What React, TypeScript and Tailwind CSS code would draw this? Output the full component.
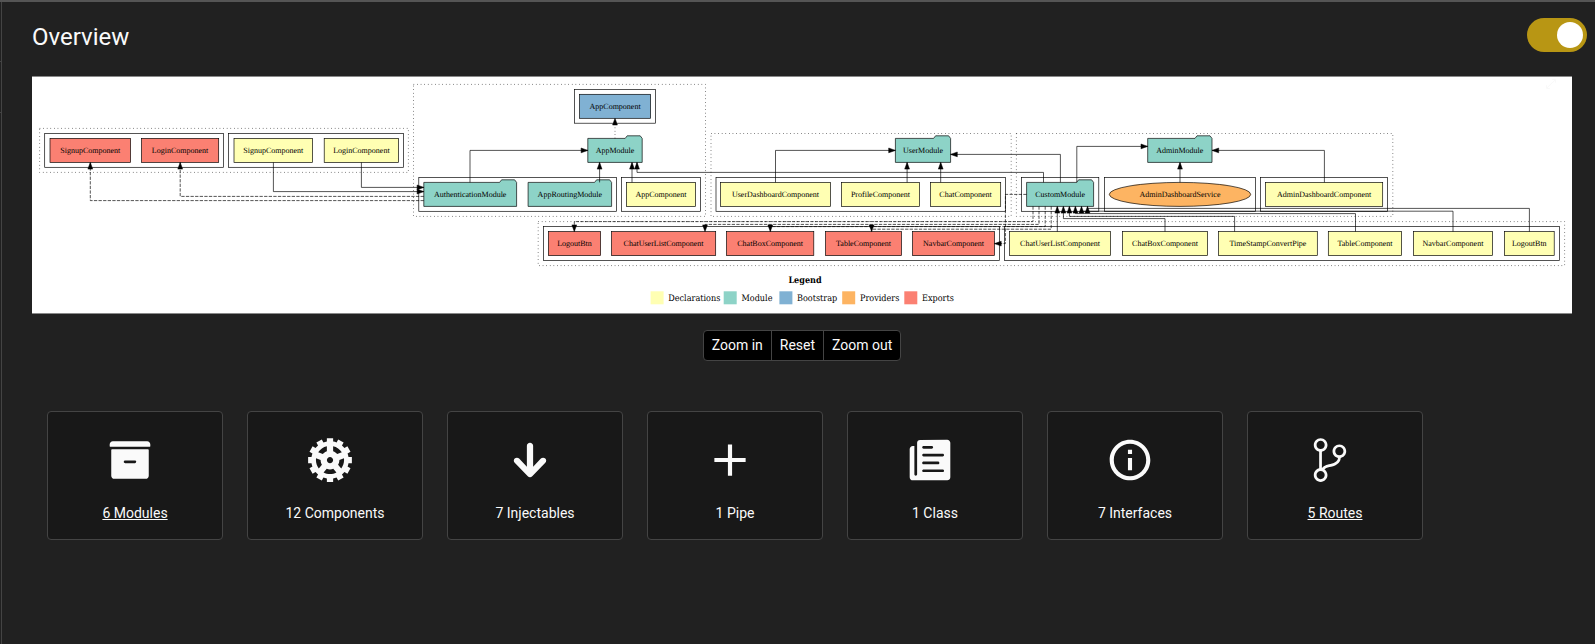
import React from "react";
import {
  IoIosArchive,
  IoIosGitBranch,
  IoIosPaper,
  IoIosResize,
  IoMdAdd,
  IoMdArrowRoundDown,
  IoMdCog,
  IoMdInformationCircleOutline,
} from "react-icons/io";
import type { IconType } from "react-icons";

const YELLOW = "#ffffb3";
const GREEN = "#8dd3c7";
const BLUE = "#80b1d3";
const ORANGE = "#fdb462";
const RED = "#fb8072";

type Span = [x1: number, x2: number];
type Point = [x: number, y: number];

// Vertical extents of the rows of nodes
const BOOT = 94.3;
const MODULES = 138.4;
const MIDDLE = 182.4;
const BOTTOM = 231.6;
const NODE_H = 24;

const clusters: [Span, Span][] = [
  [[39.6, 408.4], [128.4, 172.4]],
  [[413.5, 705.5], [84.4, 216.4]],
  [[711, 1011.2], [133.5, 216.4]],
  [[1016.4, 1392.8], [133.5, 216.4]],
  [[538.2, 1564.6], [221.6, 265.6]],
];

const frames: [Span, number][] = [
  [[44.7, 223.5], 133.5],
  [[228.5, 403.6], 133.5],
  [[574.6, 655.5], 89.4],
  [[418.8, 616.4], 177.5],
  [[621.4, 700.6], 177.5],
  [[716, 1005.6], 177.5],
  [[1021.4, 1098.8], 177.5],
  [[1104.5, 1255.5], 177.5],
  [[1260.5, 1387.6], 177.5],
  [[543.4, 999.5], 226.6],
  [[1004.5, 1559.5], 226.6],
];

const boxes: [string, Span, number, string][] = [
  ["SignupComponent", [50, 130.6], MODULES, RED],
  ["LoginComponent", [141.5, 218.7], MODULES, RED],
  ["SignupComponent", [234, 312.6], MODULES, YELLOW],
  ["LoginComponent", [324.2, 398.6], MODULES, YELLOW],
  ["AppComponent", [579.6, 650.6], BOOT, BLUE],
  ["AppComponent", [626.4, 695.6], MIDDLE, YELLOW],
  ["UserDashboardComponent", [720.6, 830.4], MIDDLE, YELLOW],
  ["ProfileComponent", [841.4, 919.5], MIDDLE, YELLOW],
  ["ChatComponent", [930.5, 1000.7], MIDDLE, YELLOW],
  ["AdminDashboardComponent", [1265.5, 1382.7], MIDDLE, YELLOW],
  ["LogoutBtn", [548.4, 600.6], BOTTOM, RED],
  ["ChatUserListComponent", [611.5, 715.7], BOTTOM, RED],
  ["ChatBoxComponent", [726.5, 813.8], BOTTOM, RED],
  ["TableComponent", [825.5, 901.5], BOTTOM, RED],
  ["NavbarComponent", [912.5, 994.5], BOTTOM, RED],
  ["ChatUserListComponent", [1009.5, 1110.6], BOTTOM, YELLOW],
  ["ChatBoxComponent", [1122.4, 1207.6], BOTTOM, YELLOW],
  ["TimeStampConvertPipe", [1218.5, 1317.3], BOTTOM, YELLOW],
  ["TableComponent", [1328.3, 1401.6], BOTTOM, YELLOW],
  ["NavbarComponent", [1413.4, 1492.5], BOTTOM, YELLOW],
  ["LogoutBtn", [1504.4, 1554.2], BOTTOM, YELLOW],
];

const folders: [string, Span, number][] = [
  ["AppModule", [587.8, 642.2], MODULES],
  ["UserModule", [895.4, 950.6], MODULES],
  ["AdminModule", [1147.7, 1212], MODULES],
  ["AuthenticationModule", [423.8, 516.6], MIDDLE],
  ["AppRoutingModule", [528.1, 611.6], MIDDLE],
  ["CustomModule", [1026.6, 1093.6], MIDDLE],
];

// The last point of an edge is the tip of its arrow head
const edges: { points: Point[]; dash?: string }[] = [
  { points: [[273.4, 162.4], [273.4, 191.6], [423.8, 191.6]] },
  { points: [[361.4, 162.4], [361.4, 187.4], [423.8, 187.4]] },
  { points: [[470, 182.4], [470, 150.4], [587.8, 150.4]] },
  { points: [[599.6, 182.4], [599.6, 162.4]] },
  { points: [[632, 182.4], [632, 162.4]] },
  { points: [[1043.5, 182.4], [1043.5, 172.4], [637, 172.4], [637, 162.4]] },
  { points: [[775.5, 182.4], [775.5, 150.4], [895.4, 150.4]] },
  { points: [[907.1, 182.4], [907.1, 162.4]] },
  { points: [[940.7, 182.4], [940.7, 162.4]] },
  { points: [[1060.4, 182.4], [1060.4, 154.4], [950.6, 154.4]] },
  { points: [[1076.8, 182.4], [1076.8, 146.4], [1147.7, 146.4]] },
  { points: [[1180, 182.4], [1180, 162.4]] },
  { points: [[1324.4, 182.4], [1324.4, 150.4], [1212, 150.4]] },
  { points: [[1057.3, 231.6], [1057.3, 206.4]] },
  { points: [[1165, 231.6], [1165, 218.6], [1063.4, 218.6], [1063.4, 206.4]] },
  { points: [[1234.6, 231.6], [1234.6, 216.4], [1069.4, 216.4], [1069.4, 206.4]] },
  { points: [[1355.5, 231.6], [1355.5, 213.6], [1075.4, 213.6], [1075.4, 206.4]] },
  { points: [[1453, 231.6], [1453, 211.2], [1081.5, 211.2], [1081.5, 206.4]] },
  { points: [[1529.4, 231.6], [1529.4, 208.4], [1087.5, 208.4], [1087.5, 206.4]] },
  { points: [[615, 138.4], [615, 118.3]], dash: "0.7 2.7" },
  { points: [[423.8, 200.6], [90.3, 200.6], [90.3, 162.4]], dash: "3.3 1.3" },
  { points: [[423.8, 196.4], [180.2, 196.4], [180.2, 162.4]], dash: "3.3 1.3" },
  { points: [[1033, 206.4], [1033, 221.6], [574.3, 221.6], [574.3, 231.6]], dash: "3.3 1.3" },
  { points: [[1039, 206.4], [1039, 224.4], [705, 224.4], [705, 231.6]], dash: "3.3 1.3" },
  { points: [[1045.2, 206.4], [1045.2, 226.6], [770.3, 226.6], [770.3, 231.6]], dash: "3.3 1.3" },
  { points: [[1051.2, 206.4], [1051.2, 229.2], [871.6, 229.2], [871.6, 231.6]], dash: "3.3 1.3" },
  { points: [[1026.6, 194.4], [1005.4, 194.4], [1005.4, 243.6], [994.5, 243.6]], dash: "3.3 1.3" },
];

const legend: [string, string, number, number][] = [
  ["Declarations", YELLOW, 650.6, 668.3],
  ["Module", GREEN, 723.7, 741.5],
  ["Bootstrap", BLUE, 779.4, 797],
  ["Providers", ORANGE, 842.2, 860],
  ["Exports", RED, 904.3, 922],
];

function Edge({ points, dash }: { points: Point[]; dash?: string }) {
  const [x, y] = points[points.length - 1];
  const [px, py] = points[points.length - 2];
  const angle = (Math.atan2(y - py, x - px) * 180) / Math.PI;
  return (
    <>
      <polyline
        points={points.map((p) => p.join(",")).join(" ")}
        fill="none"
        stroke="#000"
        strokeWidth={0.67}
        strokeDasharray={dash}
      />
      <polygon points="0,0 -6.7,-2.4 -6.7,2.4" fill="#000" stroke="#000" strokeWidth={0.5} transform={`translate(${x} ${y}) rotate(${angle})`} />
    </>
  );
}

function NodeLabel({ x, y, children }: { x: number; y: number; children: string }) {
  return (
    <text x={x} y={y + 14.6} textAnchor="middle" className="font-['Liberation_Serif',serif] text-[8px]">
      {children}
    </text>
  );
}

function DependencyGraph() {
  return (
    <svg
      viewBox="32 77 1540 236"
      textRendering="geometricPrecision"
      className="block w-full"
      role="img"
      aria-label="Dependency graph"
    >
      <g fill="none" stroke="#000" strokeWidth={0.67} strokeDasharray="0.7 2.9">
        {clusters.map(([[x1, x2], [y1, y2]]) => (
          <rect key={x1} x={x1} y={y1} width={x2 - x1} height={y2 - y1} />
        ))}
      </g>
      <g fill="none" stroke="#000" strokeWidth={0.67}>
        {frames.map(([[x1, x2], y]) => (
          <rect key={x1} x={x1} y={y} width={x2 - x1} height={33.8} />
        ))}
      </g>
      {boxes.map(([name, [x1, x2], y, fill]) => (
        <g key={`${name}-${x1}`}>
          <rect x={x1} y={y} width={x2 - x1} height={NODE_H} fill={fill} stroke="#000" strokeWidth={0.67} />
          <NodeLabel x={(x1 + x2) / 2} y={y}>{name}</NodeLabel>
        </g>
      ))}
      {folders.map(([name, [x1, x2], y]) => (
        <g key={name}>
          <path
            d={`M${x2} ${y}L${x2 - 2} ${y - 2.6}H${x2 - 15}L${x2 - 17} ${y}H${x1}V${y + NODE_H}H${x2}Z`}
            fill={GREEN}
            stroke="#000"
            strokeWidth={0.67}
          />
          <NodeLabel x={(x1 + x2) / 2} y={y}>{name}</NodeLabel>
        </g>
      ))}
      <ellipse cx={1180} cy={194.4} rx={70.7} ry={12} fill={ORANGE} stroke="#000" strokeWidth={0.67} />
      <NodeLabel x={1180} y={MIDDLE}>AdminDashboardService</NodeLabel>
      {edges.map((edge, i) => (
        <Edge key={i} {...edge} />
      ))}
      <text x={805} y={283} textAnchor="middle" className="font-['DejaVu_Serif_Condensed','DejaVu_Serif',serif] text-[9px] font-bold">
        Legend
      </text>
      {legend.map(([name, fill, x, textX]) => (
        <g key={name}>
          <rect x={x} y={291.3} width={13} height={13} fill={fill} />
          <text x={textX} y={301} className="font-['DejaVu_Serif_Condensed','DejaVu_Serif',serif] text-[9px]">
            {name}
          </text>
        </g>
      ))}
    </svg>
  );
}

const stats: { label: string; icon: IconType; href?: string }[] = [
  { label: "6 Modules", icon: IoIosArchive, href: "#modules" },
  { label: "12 Components", icon: IoMdCog },
  { label: "7 Injectables", icon: IoMdArrowRoundDown },
  { label: "1 Pipe", icon: IoMdAdd },
  { label: "1 Class", icon: IoIosPaper },
  { label: "7 Interfaces", icon: IoMdInformationCircleOutline },
  { label: "5 Routes", icon: IoIosGitBranch, href: "#routes" },
];

export default function App() {
  return (
    <div className="flex min-h-screen border-t-2 border-[#555] bg-[#212121] font-['Roboto',sans-serif] text-[#fafafa]">
      <div className="w-0.5 shrink-0 border-r border-[#444]">
        <div className="h-[60px] border-b border-[#444]" />
        <div className="h-[51px] border-b border-[#444]" />
      </div>
      <main className="min-w-0 grow">
        <header className="flex items-start justify-between pt-4 pr-2 pl-[30px]">
          <h1 className="pt-[3px] text-2xl leading-8">Overview</h1>
          <input
            type="checkbox"
            role="switch"
            aria-label="Dark mode"
            defaultChecked
            className="relative h-[34px] w-[60px] cursor-pointer appearance-none rounded-full bg-[#ccc] before:absolute before:top-1 before:left-1 before:size-[26px] before:rounded-full before:bg-white checked:bg-[#b89614] checked:before:left-[30px]"
          />
        </header>

        <div className="pt-[23px] pr-[23px] pl-[30px]">
          <div className="relative border-y border-[#888] bg-white">
            <DependencyGraph />
            <button type="button" aria-label="Full screen" className="absolute top-0 right-3.5 text-[#f8f8f8]">
              <IoIosResize size={14} />
            </button>
          </div>

          <div className="mt-4 flex justify-center">
            <div className="flex divide-x divide-[#444] overflow-hidden rounded border border-[#444] bg-black text-sm leading-[29px]">
              <button type="button" className="px-2">Zoom in</button>
              <button type="button" className="px-2">Reset</button>
              <button type="button" className="px-2">Zoom out</button>
            </div>
          </div>

          <ul className="mt-[50px] flex flex-wrap gap-6 px-[15px]">
            {stats.map(({ label, icon: Icon, href }) => (
              <li key={label} className="flex h-[129px] w-44 flex-col items-center rounded border border-[#444] bg-[#181818] pt-[23px]">
                <div className="pr-2.5">
                  <Icon size={50} />
                </div>
                <p className="mt-[18px] text-sm leading-5">
                  {href ? <a href={href} className="underline">{label}</a> : label}
                </p>
              </li>
            ))}
          </ul>
        </div>
      </main>
    </div>
  );
}
